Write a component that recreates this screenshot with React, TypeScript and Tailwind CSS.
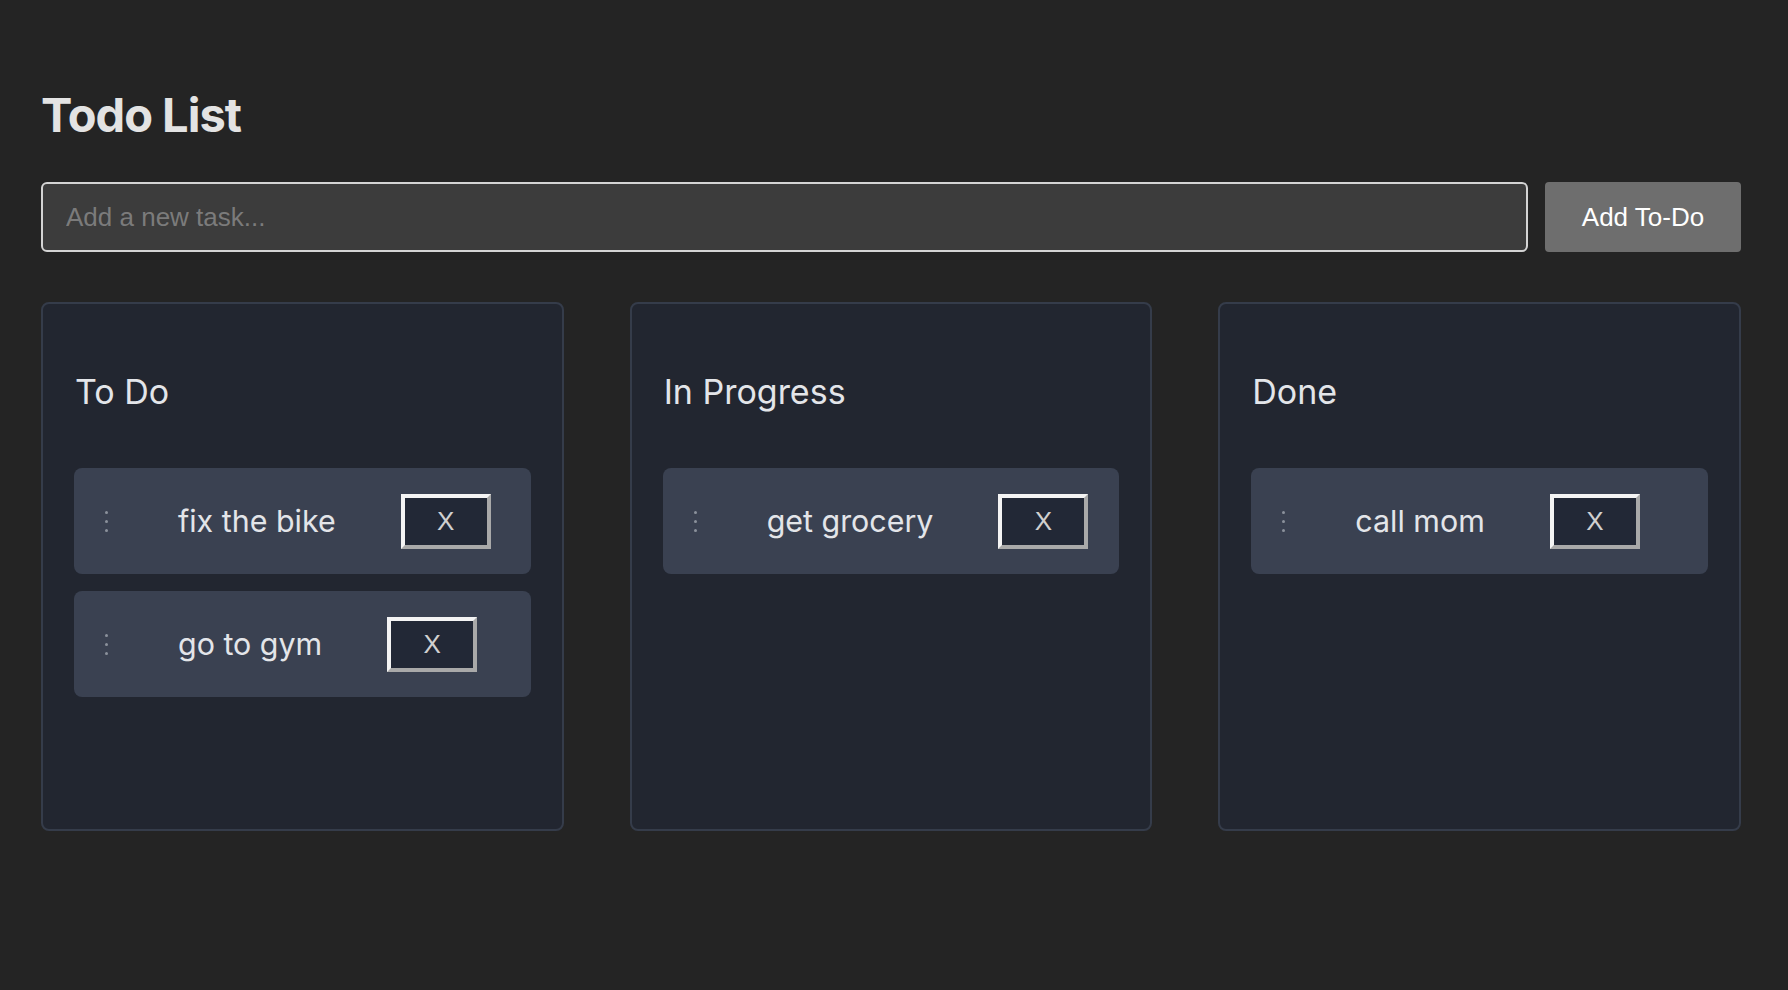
import { useState } from "react";

type Task = { id: number; title: string };

const columns: { name: string; tasks: Task[] }[] = [
  {
    name: "To Do",
    tasks: [
      { id: 1, title: "fix the bike" },
      { id: 2, title: "go to gym" },
    ],
  },
  { name: "In Progress", tasks: [{ id: 3, title: "get grocery" }] },
  { name: "Done", tasks: [{ id: 4, title: "call mom" }] },
];

function DragHandle() {
  return (
    <div className="flex flex-col items-center gap-[6px] w-[3px] ml-[31px] shrink-0">
      <span className="w-[3px] h-[3px] rounded-full bg-[#8b919c]" />
      <span className="w-[3px] h-[3px] rounded-full bg-[#8b919c]" />
      <span className="w-[3px] h-[3px] rounded-full bg-[#8b919c]" />
    </div>
  );
}

function TaskCard({ task }: { task: Task }) {
  return (
    <div className="flex items-center h-[106px] rounded-[8px] bg-[#3a4151]">
      <DragHandle />
      <span className="ml-[70px] text-[30.4px] leading-[40px] text-[#e3e5e9] font-['Inter',sans-serif]">
        {task.title}
      </span>
      <button className="ml-[65px] w-[90px] h-[55px] shrink-0 border-4 border-t-[#f4f4f4] border-l-[#f4f4f4] border-b-[#a9a9a9] border-r-[#a9a9a9] bg-[#222836] text-[26px] text-[#d0d0d0] font-['Liberation_Sans',Arial,sans-serif]">
        X
      </button>
    </div>
  );
}

export default function App() {
  const [text, setText] = useState("");

  return (
    <div className="min-h-screen bg-[#242424] pt-[87px] font-['Inter',sans-serif]">
      <div className="w-[1700px] ml-[41px]">
        <h1 className="text-[47px] leading-[56px] font-bold tracking-[-1px] text-[#e3e3e3]">Todo List</h1>

        <div className="flex gap-[17px] mt-[39px]">
          <input
            value={text}
            onChange={(e) => setText(e.target.value)}
            placeholder="Add a new task..."
            className="flex-1 h-[70px] rounded-[6px] border-2 border-[#d4d4d4] bg-[#3c3c3c] px-[23px] text-[26px] text-[#e3e3e3] placeholder:text-[#7b7b7b] outline-none font-['Liberation_Sans',Arial,sans-serif]"
          />
          <button className="w-[196px] h-[70px] rounded-[4px] bg-[#6e6e6e] text-[26px] text-white font-['Liberation_Sans',Arial,sans-serif]">
            Add To-Do
          </button>
        </div>

        <div className="grid grid-cols-3 gap-x-[66px] mt-[50px]">
          {columns.map((col) => (
            <div
              key={col.name}
              className="h-[529px] rounded-[8px] border-2 border-[#353c4a] bg-[#222630] px-[31px] pt-[65px]"
            >
              <h2 className="text-[34px] leading-[46px] text-[#e3e5e9] pl-[1px]">{col.name}</h2>
              <div className="flex flex-col gap-[17px] mt-[53px]">
                {col.tasks.map((t) => (
                  <TaskCard key={t.id} task={t} />
                ))}
              </div>
            </div>
          ))}
        </div>
      </div>
    </div>
  );
}
